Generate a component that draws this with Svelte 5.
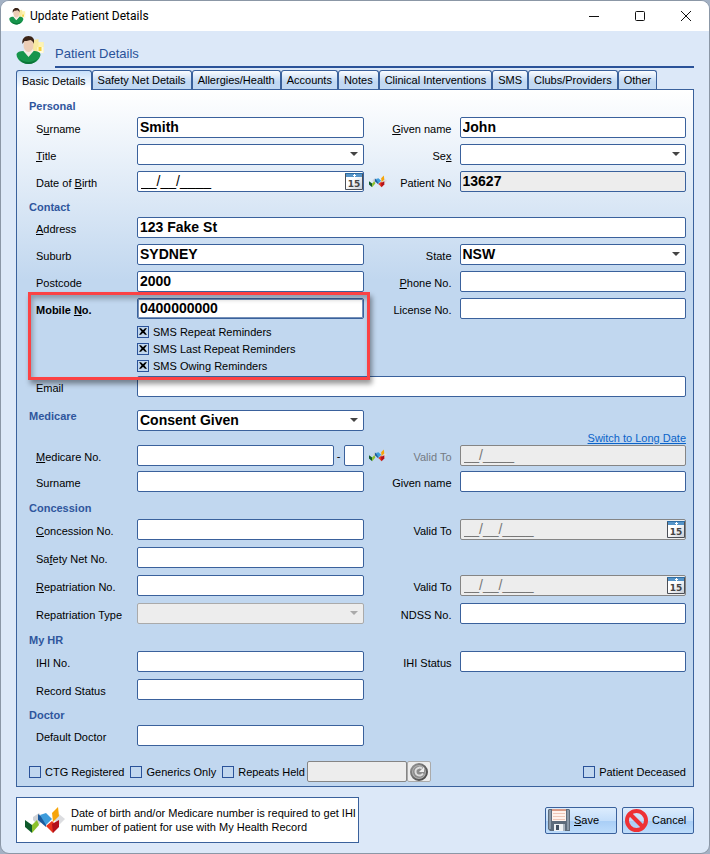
<script>
  const tabs = ['Basic Details', 'Safety Net Details', 'Allergies/Health', 'Accounts', 'Notes', 'Clinical Interventions', 'SMS', 'Clubs/Providers', 'Other'];
  let active = $state('Basic Details');
  const reminders = ['SMS Repeat Reminders', 'SMS Last Repeat Reminders', 'SMS Owing Reminders'];
</script>

{#snippet patient(size)}
  <svg width={size} height={size} viewBox="0 0 28 29" aria-hidden="true">
    <path d="M17 4l5-1v3h5v11h-8l-3-4z" fill="#f8e9a0" />
    <path d="M22 6h5v5h-5z" fill="#fdf3b4" />
    <path d="M21 11h6v6h-6z" fill="#fffbe0" />
    <path d="M22 11h3v4h-3z" fill="#f5d23c" />
    <path d="M0 18c1-2 3-3 7-3l5 5 5-5c4 0 7 1 7 4-1 5-6 9-12 9S0 24 0 18z" fill="#17954c" />
    <path d="M3 23c5 4 13 4 18 0-2 3-5 5-9 5s-7-2-9-5z" fill="#0b7438" />
    <path d="M7 15l5 6 5-6-2-3H9z" fill="#f6ece4" />
    <ellipse cx="12" cy="9" rx="5" ry="7" fill="#eccdb6" />
    <path d="M6 8C5 3 8 0 12 0s7 3 5 8c0-2-1-3-3-4-3 1-5 1-6 1z" fill="#3b2418" />
  </svg>
{/snippet}

{#snippet health(w, h)}
  <svg width={w} height={h} viewBox="0 0 40 27" aria-hidden="true">
    <path d="M8 10l6-4 5 7-6 5-5-5z" fill="#cfd2d6" />
    <path d="M34 7l6 5-6 6-5-5z" fill="#dcdde0" />
    <path d="M0 13l7 5v8l-7-6z" fill="#0e5a2b" />
    <path d="M7 18l5-5 2 5-7 8z" fill="#8cc12b" />
    <path d="M13 7l8 6v7l-8-7z" fill="#1c5a9c" />
    <path d="M15 8l6-2 6 6-6 6z" fill="#3e9cdb" />
    <path d="M27 6l6-6 1 9-6 6z" fill="#f6a50a" />
    <path d="M21 19l6-5 4 4-3 8z" fill="#e8351c" />
    <path d="M27 17l7-4v7l-6 6z" fill="#b3111a" />
  </svg>
{/snippet}

{#snippet calendar()}
  <button class="cal" type="button" aria-label="Pick a date">
    <svg width="18" height="17" viewBox="0 0 18 17" aria-hidden="true">
      <defs><linearGradient id="page" x2="1" y2="1"><stop offset=".4" stop-color="#fff" /><stop offset="1" stop-color="#c6cbd3" /></linearGradient></defs>
      <path d="M.5.5h17v16H.5z" fill="url(#page)" stroke="#4b4f57" />
      <path d="M1 1h16v3H1z" fill="#5594c8" /><path d="M0 0h18v1H0z" fill="#2e6da4" />
      <path d="M8 2.500h3M9.500 1v3" stroke="#fff" />
      <text x="9" y="14" text-anchor="middle">15</text>
    </svg>
  </button>
{/snippet}

{#snippet lab(id, a, key = '', b = '', cls = '')}
  <label for={id} class={cls}>{a}{#if key}<u>{key}</u>{/if}{b}</label>
{/snippet}

{#snippet text(id, value = '')}
  <input type="text" {id} {value} />
{/snippet}

{#snippet combo(id, value = '', disabled = false)}
  <div class="holder">
    <select {id} {disabled}><option>{value}</option></select>
    <svg class="arrow" class:off={disabled} width="8" height="4" viewBox="0 0 8 4" aria-hidden="true"><path d="M0 0h8L4 4z" /></svg>
  </div>
{/snippet}

{#snippet date(id, disabled = false)}
  <div class="holder">
    <input class="date" type="text" {id} {disabled} value="__/__/____" />
    {@render calendar()}
  </div>
{/snippet}

<div class="window">
  <header class="titlebar">
    {@render patient(17)}
    <span>Update Patient Details</span>
    <div class="controls">
      <button type="button" aria-label="Minimise"><svg width="12" height="12"><path d="M1 6.500h10" /></svg></button>
      <button type="button" aria-label="Maximise"><svg width="12" height="12"><rect x="1.500" y="1.500" width="9" height="9" rx="1" /></svg></button>
      <button type="button" aria-label="Close"><svg width="12" height="12"><path d="M1 1l10 10M11 1L1 11" /></svg></button>
    </div>
  </header>

  <main>
    <div class="banner">
      {@render patient(29)}
      <h1>Patient Details</h1>
    </div>

    <div class="tabs" role="tablist">
      {#each tabs as tab}
        <button type="button" role="tab" aria-selected={tab === active} class:active={tab === active} onclick={() => (active = tab)}>{tab}</button>
      {/each}
    </div>

    <form class="panel" id="details" onsubmit={(e) => e.preventDefault()}>
      <h2>Personal</h2>
      <div class="grid">
        {@render lab('surname', 'S', 'u', 'rname')}{@render text('surname', 'Smith')}
        {@render lab('given', '', 'G', 'iven name', 'end')}{@render text('given', 'John')}
        {@render lab('title', '', 'T', 'itle')}{@render combo('title')}
        {@render lab('sex', 'Se', 'x', '', 'end')}{@render combo('sex')}
        {@render lab('dob', 'Date of ', 'B', 'irth')}{@render date('dob')}
        <div class="pair">{@render health(18, 13)}{@render lab('patno', 'Patient No', '', '', 'end')}</div>
        <input type="text" id="patno" value="13627" readonly />
      </div>

      <h2 class="tight">Contact</h2>
      <div class="grid">
        {@render lab('address', '', 'A', 'ddress')}
        <input class="wide" type="text" id="address" value="123 Fake St" />
        {@render lab('suburb', 'Suburb')}{@render text('suburb', 'SYDNEY')}
        {@render lab('state', 'State', '', '', 'end')}{@render combo('state', 'NSW')}
        {@render lab('postcode', 'Postcode')}{@render text('postcode', '2000')}
        {@render lab('phone', '', 'P', 'hone No.', 'end')}{@render text('phone')}
      </div>
      <div class="mobile">
        <div class="grid">
          {@render lab('mobile', 'Mobile ', 'N', 'o.', 'strong')}
          <input class="current" type="text" id="mobile" value="0400000000" />
          {@render lab('license', 'License No.', '', '', 'end')}{@render text('license')}
        </div>
        <div class="grid">
          <div class="checks">
            {#each reminders as r}
              <label><input type="checkbox" checked />{r}</label>
            {/each}
          </div>
        </div>
        <div class="grid overlay"><div class="callout"></div></div>
      </div>
      <div class="grid">
        {@render lab('email', 'Email')}
        <input class="wide" type="text" id="email" />
      </div>

      <div class="grid medicare">
        <h2><label for="consent">Medicare</label></h2>{@render combo('consent', 'Consent Given')}
      </div>
      <div class="switch"><a href="#long-date">Switch to Long Date</a></div>
      <div class="grid close">
        {@render lab('medno', '', 'M', 'edicare No.')}
        <div class="number">
          {@render text('medno')}<span>-</span><input type="text" class="irn" aria-label="Reference number" />
        </div>
        <div class="pair">{@render health(18, 13)}{@render lab('medvalid', 'Valid To', '', '', 'end dim')}</div>
        <input class="date" type="text" id="medvalid" value="__/____" disabled />
        {@render lab('medsurname', 'Surname')}{@render text('medsurname')}
        {@render lab('medgiven', 'Given name', '', '', 'end')}{@render text('medgiven')}
      </div>

      <h2>Concession</h2>
      <div class="grid loose">
        {@render lab('conc', '', 'C', 'oncession No.')}{@render text('conc')}
        {@render lab('concvalid', 'Valid To', '', '', 'end')}{@render date('concvalid', true)}
        {@render lab('safety', 'Sa', 'f', 'ety Net No.')}<input class="only" type="text" id="safety" />
        {@render lab('repat', '', 'R', 'epatriation No.', 'first')}{@render text('repat')}
        {@render lab('repatvalid', 'Valid To', '', '', 'end')}{@render date('repatvalid', true)}
        {@render lab('repattype', 'Repatriation Type')}{@render combo('repattype', '', true)}
        {@render lab('ndss', 'NDSS No.', '', '', 'end')}{@render text('ndss')}
      </div>

      <h2>My HR</h2>
      <div class="grid loose">
        {@render lab('ihi', 'IHI No.')}{@render text('ihi')}
        {@render lab('ihistatus', 'IHI Status', '', '', 'end')}{@render text('ihistatus')}
        {@render lab('record', 'Record Status')}{@render text('record')}
      </div>

      <h2 class="tight">Doctor</h2>
      <div class="grid">
        {@render lab('doctor', 'Default Doctor')}{@render text('doctor')}
      </div>

      <div class="flags">
        <label><input type="checkbox" />CTG Registered</label>
        <label><input type="checkbox" />Generics Only</label>
        <label class="held"><input type="checkbox" />Repeats Held</label>
        <input class="repeats" type="text" aria-label="Repeats held at" disabled />
        <button class="refresh" type="button" aria-label="Look up">
          <svg width="18" height="18" viewBox="0 0 18 18" aria-hidden="true">
            <defs><linearGradient id="ball" x2="1" y2="1"><stop stop-color="#999" /><stop offset=".5" stop-color="#666" /><stop offset="1" stop-color="#444" /></linearGradient></defs>
            <circle cx="9" cy="9" r="8" fill="#b0b0b0" stroke="url(#ball)" stroke-width="2" />
            <circle cx="9" cy="9" r="6" fill="#8b8b8b" />
            <path d="M12 5.500a4 4 0 1 0 1 5" fill="none" stroke="#ddd" stroke-width="2" /><path d="M9 9h5V4z" fill="#eee" />
          </svg>
        </button>
        <label class="deceased"><input type="checkbox" />Patient Deceased</label>
      </div>
    </form>

    <footer>
      <p class="note">{@render health(40, 27)}<span>Date of birth and/or Medicare number is required to get IHI<br />number of patient for use with My Health Record</span></p>
      <button type="submit" form="details" class="action">
        <svg width="22" height="22" viewBox="0 0 22 22" aria-hidden="true">
          <path d="M1 0h20l1 1v21H2l-2-2V1z" fill="#5d6b7b" /><path d="M1 1h2v19H1zM19 1h2v20h-2z" fill="#8b99a8" />
          <path d="M4 0h14v12H4z" fill="#fff2ec" /><path d="M4 0h14v2H4z" fill="#d99a86" /><path d="M5 4.500h12M5 7.500h12M5 10.500h12" stroke="#efc7b8" />
          <path d="M6 15h11v7H6z" fill="#eef1f4" /><path d="M8 16h3v5H8z" fill="#435061" /><path d="M15 15h2v7h-2z" fill="#aab4bf" />
        </svg>
        <span><u>S</u>ave</span>
      </button>
      <button type="button" class="action">
        <svg width="23" height="23" viewBox="0 0 23 23" aria-hidden="true"><circle cx="11.500" cy="11.500" r="9.500" fill="none" stroke="#ee3135" stroke-width="4" /><path d="M5 5l13 13" stroke="#ee3135" stroke-width="4" /></svg>
        <span>Cancel</span>
      </button>
    </footer>
  </main>
</div>

<style>
  :global(body) {
    background: #a3b1c4;
  }
  .window, .window * {
    box-sizing: border-box;
  }
  .window {
    border: 1px solid #8b97a6;
    border-radius: 9px;
    overflow: hidden;
    background: #dce8f8;
    font: 11px/14px "Liberation Sans", Arial, sans-serif;
    color: #000;
  }
  button, input, select {
    font: inherit;
    color: inherit;
    margin: 0;
    padding: 0;
    border-radius: 0;
  }
  h1, h2, p {
    margin: 0;
    font-size: 11px;
  }
  .titlebar {
    display: flex;
    align-items: center;
    gap: 4px;
    height: 30px;
    padding-left: 8px;
    background: #fff;
    font: 12px/16px Roboto, sans-serif;
  }
  .controls {
    display: flex;
    margin-left: auto;
  }
  .controls button {
    width: 46px;
    height: 30px;
    border: 0;
    background: none;
  }
  .controls svg {
    display: block;
    margin: auto;
    fill: none;
    stroke: #111;
  }
  main {
    padding: 5px 15px 10px;
  }
  .banner {
    display: flex;
    gap: 10px;
    height: 32px;
    margin-bottom: 2px;
  }
  h1 {
    flex: 1;
    border-bottom: 2px solid #2a5299;
    font-size: 13px;
    font-weight: normal;
    line-height: 35px;
    color: #2a5299;
  }
  .tabs {
    display: flex;
  }
  .tabs button {
    height: 19px;
    padding: 0 5px;
    border: 1px solid #3a619c;
    border-bottom: 0;
    border-radius: 3px 3px 0 0;
    background: linear-gradient(#fafcff, #c1d8f2 60%);
    white-space: nowrap;
  }
  .tabs button.active {
    height: 20px;
    margin-bottom: -1px;
    background: linear-gradient(#c8e0fa, #fff 90%);
    z-index: 1;
  }
  .panel {
    padding: 0 7px 4px 19px;
    border: 1px solid #3a619c;
    background: linear-gradient(#fff, #c1d7ef 190px);
  }
  h2 {
    margin: 8px 0 3px -7px;
    line-height: 16px;
    color: #2f569d;
  }
  h2.tight {
    margin-top: 7px;
    margin-bottom: 2px;
  }
  .grid {
    display: grid;
    grid-template-columns: 101px minmax(0, 1fr) 96px minmax(0, 1fr);
    gap: 6px 0;
    align-items: center;
  }
  .loose {
    row-gap: 7px;
  }
  .close {
    row-gap: 5px;
  }
  .grid > label, .pair label {
    padding-top: 3px;
  }
  .end {
    padding-right: 8px;
    text-align: right;
  }
  .dim {
    color: #747a83;
  }
  .strong {
    font-weight: bold;
  }
  input[type='text'], select {
    display: block;
    width: 100%;
    height: 21px;
    padding: 0 2px 1px;
    border: 1px solid #3a619c;
    border-radius: 2px;
    background: #fff;
    font-size: 14px;
    font-weight: bold;
    line-height: 18px;
    appearance: none;
  }
  input[type='text'].date {
    padding-left: 3px;
    font-weight: normal;
  }
  input[type='text']:read-only, input[type='text']:disabled {
    background: #ededed;
  }
  input[type='text']:disabled {
    border-color: #858585;
    color: #777;
  }
  select:disabled {
    border-color: #aaa;
    background: #ededed;
    opacity: 1;
  }
  .current {
    box-shadow: inset 0 0 0 1px #7590b8;
  }
  .holder {
    position: relative;
  }
  .arrow {
    position: absolute;
    right: 6px;
    top: 8px;
    fill: #444;
    pointer-events: none;
  }
  .arrow.off {
    fill: #aaa;
  }
  .cal {
    position: absolute;
    right: 1px;
    top: 2px;
    width: 18px;
    height: 17px;
    border: 0;
    background: none;
  }
  .cal svg {
    display: block;
  }
  .cal text {
    font: bold 9px "DejaVu Sans", sans-serif;
    fill: #444;
  }
  .pair {
    display: flex;
    align-items: center;
    justify-content: space-between;
    padding-left: 5px;
  }
  .wide {
    grid-column: 2 / -1;
  }
  .only {
    grid-column: 2 / 3;
  }
  .first {
    grid-column: 1;
  }
  .mobile {
    position: relative;
    margin: 6px 0 2px;
  }
  .checks {
    grid-column: 2;
    margin-top: 4px;
  }
  .checks label, .flags label {
    display: flex;
    align-items: center;
    gap: 4px;
    height: 17px;
    white-space: nowrap;
  }
  input[type='checkbox'] {
    display: grid;
    place-items: center;
    width: 12px;
    height: 12px;
    border: 1px solid #2a5299;
    background: transparent;
    appearance: none;
  }
  input[type='checkbox']:checked::before {
    content: '';
    width: 8px;
    height: 8px;
    background: #000;
    clip-path: polygon(0 10%, 25% 10%, 50% 35%, 75% 10%, 100% 10%, 68% 50%, 100% 90%, 75% 90%, 50% 65%, 25% 90%, 0 90%, 32% 50%);
  }
  .overlay {
    position: absolute;
    inset: -6px 0 -6px -8px;
    padding-left: 8px;
    pointer-events: none;
  }
  .callout {
    grid-column: 1 / 3;
    height: 100%;
    margin: 0 -6px 0 -8px;
    border: 3px solid #fb4244;
    box-shadow: 2px 4px 5px #0006, inset 2px 4px 5px #0004;
  }
  .medicare {
    margin-top: 13px;
  }
  .medicare h2 {
    margin: 0 0 8px -7px;
    line-height: 13px;
  }
  .switch {
    text-align: right;
  }
  .switch a {
    color: #0a63c9;
  }
  .number {
    display: flex;
    align-items: center;
    gap: 3px;
  }
  .number .irn {
    flex: none;
    width: 20px;
  }
  .flags {
    display: flex;
    align-items: center;
    gap: 6px;
    margin: 15px 0 0 -7px;
  }
  .flags .held {
    margin-right: -4px;
  }
  .flags .repeats {
    width: 100px;
  }
  .refresh {
    display: grid;
    place-items: center;
    width: 24px;
    height: 21px;
    margin-left: -6px;
    border: 1px solid #aaa;
    border-radius: 2px;
    background: #ededed;
  }
  .deceased {
    margin-left: auto;
  }
  footer {
    display: flex;
    align-items: center;
    gap: 5px;
    margin-top: 10px;
  }
  .note {
    display: flex;
    align-items: center;
    gap: 6px;
    width: 343px;
    height: 46px;
    margin-right: auto;
    padding: 0 0 0 8px;
    border: 1px solid #3a619c;
    background: #fff;
    white-space: nowrap;
  }
  .note :global(svg) {
    flex: none;
  }
  .action {
    display: flex;
    align-items: center;
    gap: 4px;
    width: 72px;
    height: 27px;
    padding: 0 2px;
    border: 1px solid #3a619c;
    border-radius: 2px;
    background: linear-gradient(#dcecfd, #c4defa 50%, #a9cef6 52%, #bddcfb);
  }
</style>
